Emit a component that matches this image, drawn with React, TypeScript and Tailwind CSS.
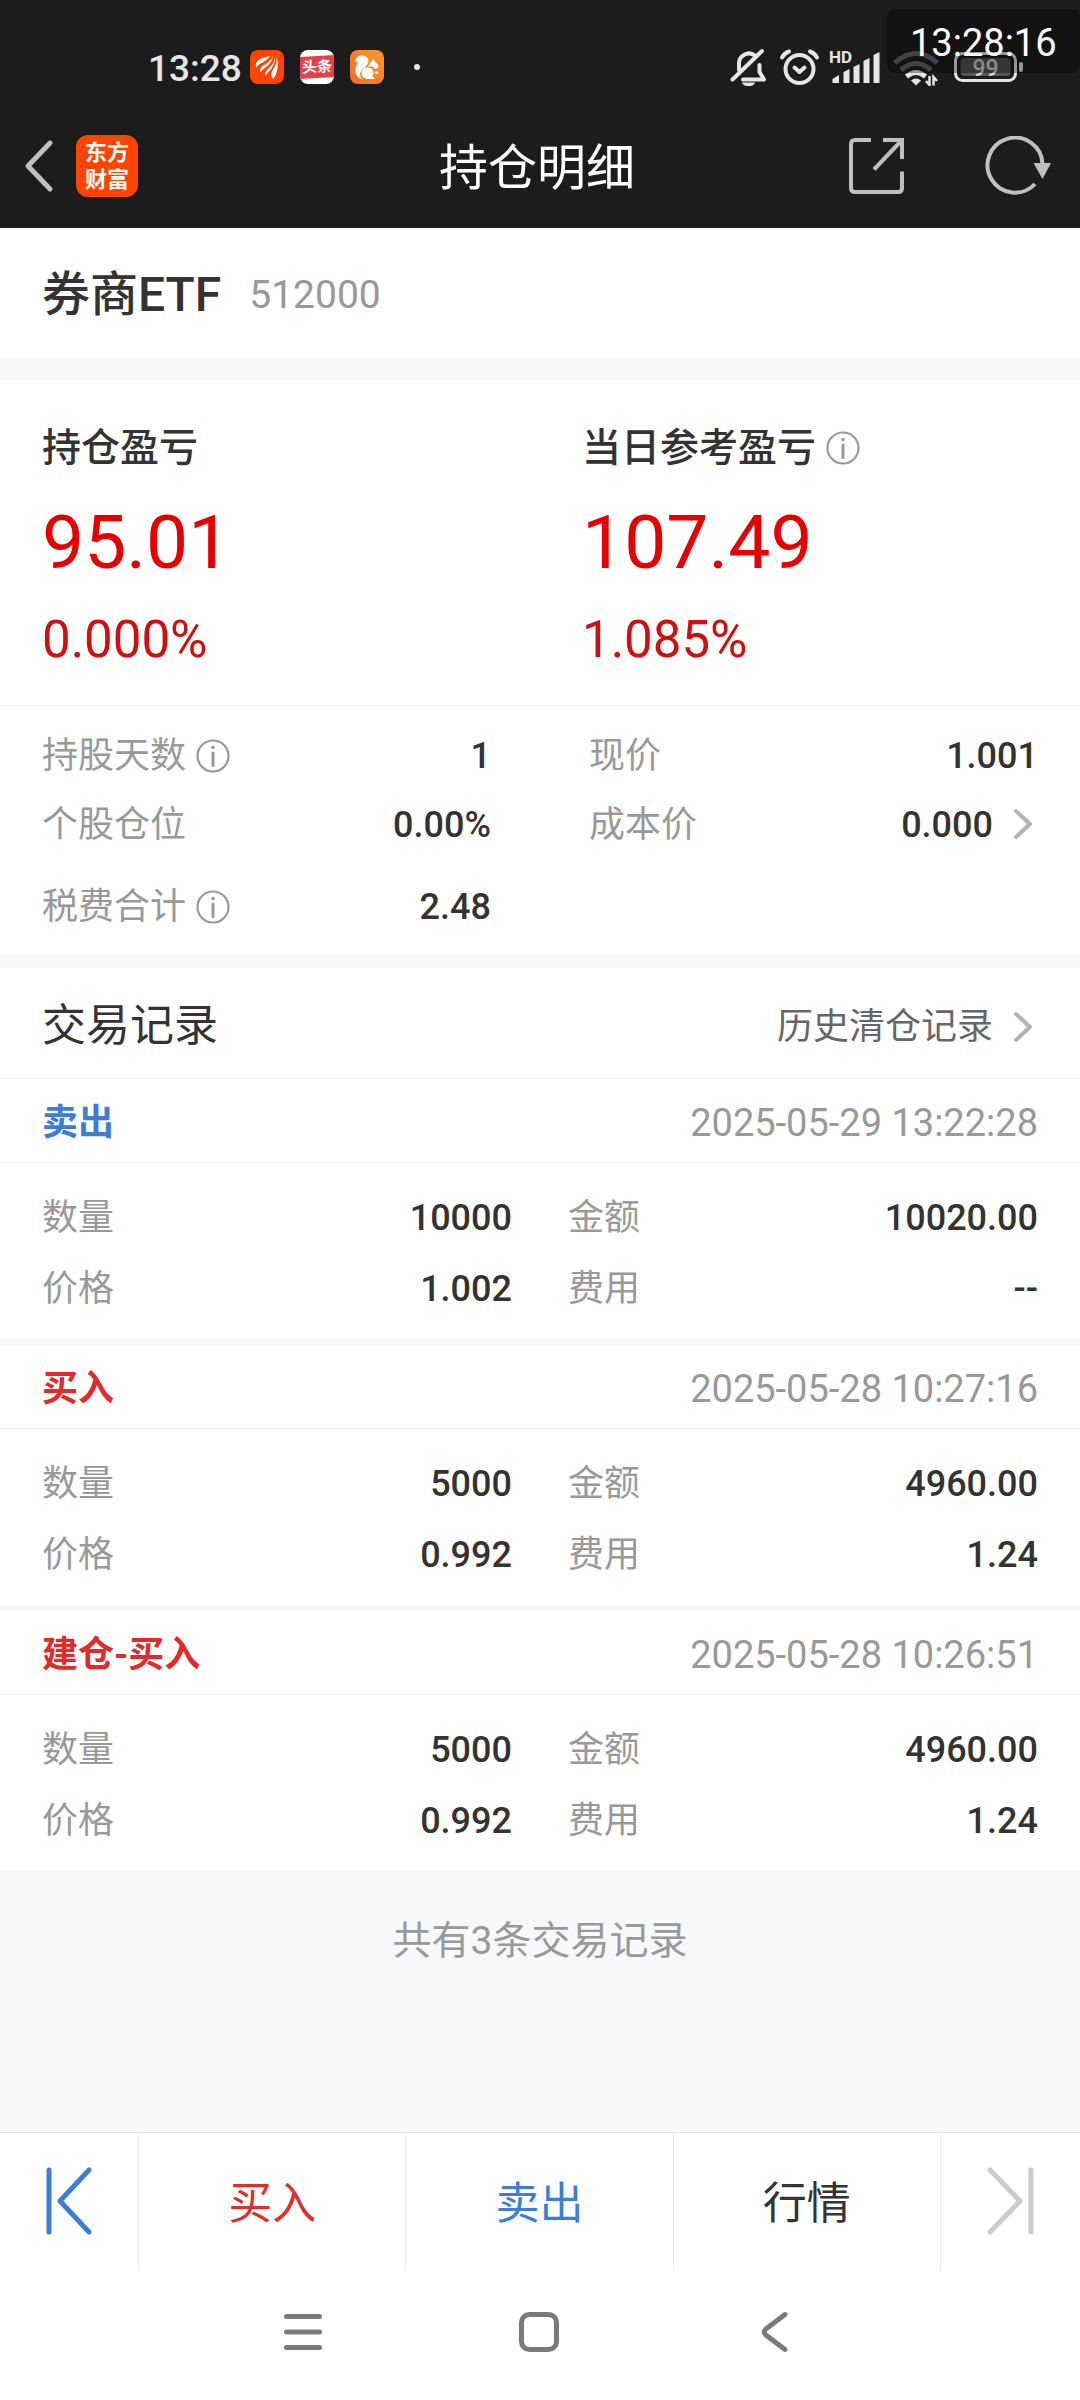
import type { ReactNode } from "react";
import clsx from "clsx";

type Side = "buy" | "sell";

const SUMMARY = [
  { label: "持仓盈亏", value: "95.01", percent: "0.000%", info: false },
  { label: "当日参考盈亏", value: "107.49", percent: "1.085%", info: true },
];

const RECORDS: { title: string; side: Side; time: string; quantity: string; amount: string; price: string; fee: string }[] = [
  { title: "卖出", side: "sell", time: "2025-05-29 13:22:28", quantity: "10000", amount: "10020.00", price: "1.002", fee: "--" },
  { title: "买入", side: "buy", time: "2025-05-28 10:27:16", quantity: "5000", amount: "4960.00", price: "0.992", fee: "1.24" },
  { title: "建仓-买入", side: "buy", time: "2025-05-28 10:26:51", quantity: "5000", amount: "4960.00", price: "0.992", fee: "1.24" },
];

function InfoIcon() {
  return (
    <svg className="h-[34px] w-[34px] shrink-0" viewBox="0 0 34 34" fill="none" stroke="#999999">
      <circle cx="17" cy="17" r="15.5" strokeWidth="2.2" />
      <path d="M17 14v12.5" strokeWidth="3" strokeLinecap="round" />
      <circle cx="17" cy="8.5" r="1.8" fill="#999999" stroke="none" />
    </svg>
  );
}

function ChevronRight() {
  return (
    <svg className="h-8 w-5 shrink-0" viewBox="0 0 20 32" fill="none" stroke="#b3b3b3" strokeWidth="4" strokeLinecap="round" strokeLinejoin="round">
      <path d="M3 3l14 13L3 29" />
    </svg>
  );
}

function AppIcons() {
  return (
    <div className="flex gap-4">
      <svg className="h-[34px] w-[34px]" viewBox="0 0 34 34">
        <rect width="34" height="34" rx="8" fill="#ff4400" />
        <g fill="#fff">
          <path d="M20.500 6C14 7 7 9 6 13.500c-.5 2 0 3.500.5 4C8 13.500 15 12.500 20.500 6z" />
          <path d="M23 6C20 13 12.500 14.500 10.500 18.500c-.8 1.600-.5 2.800.3 3.600C12.500 18 21.500 16 23 6z" />
          <path d="M24.800 6c0 9-7 12-9.300 16-.8 1.500-.4 2.700.4 3.400C18 21 26 17 24.800 6z" />
          <path d="M26.300 6.500C28 15 21.500 19.500 21 25c0 2 1 3 2.300 3.700C27 25 29.500 14 26.300 6.500z" />
        </g>
      </svg>
      <div className="flex h-[34px] w-[34px] items-center overflow-hidden rounded-lg bg-white">
        <span className="w-full -skew-y-3 bg-[#e8404a] text-center text-[15px] leading-[22px] font-bold text-white">头条</span>
      </div>
      <svg className="h-[34px] w-[34px]" viewBox="0 0 34 34">
        <defs>
          <linearGradient id="uc" x1="1" y1="0" x2="0" y2="1">
            <stop offset="0" stopColor="#ff9a2e" />
            <stop offset="1" stopColor="#f76a1c" />
          </linearGradient>
        </defs>
        <rect width="34" height="34" rx="8" fill="url(#uc)" />
        {/* tail */}
        <path
          fill="#fff"
          d="M12 5.500c-5 0-7 3.500-6.500 7 .8-1 2-1.300 3-1-2.500 3-3.500 6.500-3 10C6 26 8.500 28.500 12 29c-2.500-3-2.500-6-.5-8.500 2-2.700 6.500-4.500 7-9 .3-3.500-2.500-6-6.500-6z"
        />
        {/* head and body */}
        <path fill="#fff" d="M23 8.500c-.5 3-4.500 5-4.500 8.500 2-1 4.500-.5 6 1.500 1.500.5 3.500 0 4-1.500 0-3-2.500-4-3.500-5-.3-1.500-1-2.800-2-3.500z" />
        <path fill="#fff" d="M18 17.500a5.800 5.800 0 1 0 0 11.500h6.500c0-1.500-1-2.300-2.500-2.500 3.500-4 .5-9-4-9z" />
        <circle cx="26.500" cy="22.500" r="1.600" fill="#fff" />
      </svg>
    </div>
  );
}

function StatusIcons() {
  return (
    <svg className="h-[38px] w-[294px]" viewBox="730 48 294 38" fill="none">
      {/* muted bell */}
      <g stroke="#e6e6e6" strokeWidth="4" strokeLinecap="round" strokeLinejoin="round">
        <path d="M739 70V64a10 10 0 0 1 16-8.500M759.500 65v7l4.500 7.500H743" />
        <path d="M732.500 79.500L762 51" />
      </g>
      <path d="M742 82.500h13c-1 5-12 5-13 0z" fill="#e6e6e6" />
      {/* alarm */}
      <g stroke="#e6e6e6" strokeWidth="4" strokeLinecap="round" strokeLinejoin="round">
        <circle cx="799.500" cy="69" r="14" />
        <path d="M794.500 67.500l5 4.500 5-4.500" />
        <path d="M782 57.500q2.500-4.500 7-6M817 57.500q-2.500-4.500-7-6" />
      </g>
      <text x="829" y="63" fill="#e6e6e6" fontSize="17" fontWeight="700" fontFamily="Roboto">
        HD
      </text>
      <g fill="#e6e6e6">
        <path d="M832.500 83v-4l6.500-4v8zM843.500 83V72l6-3v14zM853.500 83V67l6-3v19zM863.500 83V61l6-3v25zM873.500 83V55l6-3v31z" />
      </g>
      {/* wifi: outer arcs are faint, inner ones lit */}
      <g strokeWidth="5">
        <path d="M894.500 63q21.500-19 43 0" stroke="#666666" />
        <path d="M901 70q15-13 30 0" stroke="#666666" />
        <path d="M906.500 76.500q9.500-8 19 0" stroke="#e6e6e6" />
      </g>
      <path d="M911 80.500q5-4 10 0l-5 5z" fill="#e6e6e6" />
      <path d="M929.500 76v9l-3.500-4M933.500 85.500V77l3.500 4" stroke="#e6e6e6" strokeWidth="2.500" />
      {/* battery */}
      <rect x="955.500" y="53.500" width="60" height="27" rx="7" stroke="#e6e6e6" strokeWidth="3" />
      <rect x="960.500" y="58" width="50" height="18" rx="4" fill="#555555" />
      <rect x="1019" y="62" width="4" height="10" rx="2" fill="#e6e6e6" />
      <text x="985.500" y="75.500" fill="#d4d4d4" fontSize="23" fontWeight="500" fontFamily="Roboto" textAnchor="middle">
        99
      </text>
    </svg>
  );
}

function StatusBar() {
  return (
    <div className="relative flex h-[106px] items-center pt-7 pr-14 pl-[148px]">
      <span className="w-[102px] pt-0.5 text-[37px] leading-none font-medium text-[#e6e6e6]">13:28</span>
      <AppIcons />
      <span className="ml-[30px] h-1.5 w-1.5 rounded-full bg-[#e6e6e6]" />
      <div className="ml-auto">
        <StatusIcons />
      </div>
      <div className="absolute top-[9px] right-0 flex h-16 w-[193px] items-center rounded-lg bg-black/35 pt-1 pl-[23px] text-[38px] leading-none text-white">
        13:28:16
      </div>
    </div>
  );
}

function TitleBar() {
  return (
    <div className="grid h-[122px] grid-cols-[1fr_auto_1fr] items-center pr-7 pb-0.5 pl-[22px]">
      <div className="flex items-center gap-[22px]">
        <button type="button" aria-label="返回">
          <svg className="h-[54px] w-8" viewBox="0 0 32 54" fill="none" stroke="#bfbfbf" strokeWidth="5" strokeLinecap="round" strokeLinejoin="round">
            <path d="M28 4L6 27l22 23" />
          </svg>
        </button>
        <a href="#home" className="flex h-[62px] w-[62px] flex-col items-center justify-center rounded-xl bg-[#ff4400] text-[22px] leading-[27px] font-bold text-white">
          <span>东方</span>
          <span>财富</span>
        </a>
      </div>
      <h1 className="pt-1 text-[49px] leading-none text-white">持仓明细</h1>
      <div className="flex items-center justify-end gap-[78px]">
        <button type="button" aria-label="分享">
          <svg className="h-[60px] w-[60px]" viewBox="0 0 60 60" fill="none" stroke="#bfbfbf" strokeWidth="4">
            <path d="M25 4H9q-4 0-4 4v44q0 4 4 4h43q4 0 4-4V35.500" />
            <path d="M37 4h19v19M56 4L28 33.500" />
          </svg>
        </button>
        <button type="button" aria-label="刷新">
          <svg className="h-[60px] w-[68px]" viewBox="0 0 68 60" fill="none" stroke="#bfbfbf" strokeWidth="4">
            <path d="M51 48A27.500 27.500 0 1 1 58.500 28" />
            <path d="M49.500 27h17.500l-8.500 16z" fill="#bfbfbf" stroke="none" />
          </svg>
        </button>
      </div>
    </div>
  );
}

function Stat({ label, value, info, className }: { label: string; value: string; info?: boolean; className?: string }) {
  return (
    <div className={clsx("flex items-center justify-between pt-0.5", className)}>
      <dt className="flex items-center gap-2.5 text-[#999999]">
        {label}
        {info && <InfoIcon />}
      </dt>
      <dd className="font-medium text-[#333333]">{value}</dd>
    </div>
  );
}

function Tab({ className, children, ...rest }: { className: string; children: ReactNode; disabled?: boolean; "aria-label"?: string }) {
  return (
    <button type="button" className={clsx("flex items-center justify-center", className)} {...rest}>
      {children}
    </button>
  );
}

export default function App() {
  return (
    <div className="flex min-h-screen flex-col bg-[#f6f8fa] font-[Roboto,'Noto_Sans_CJK_SC',sans-serif] text-[36px] leading-[44px] text-[#333333]">
      <header className="bg-[#1c1c1c]">
        <StatusBar />
        <TitleBar />
      </header>

      <main className="flex-1">
        <section className="flex h-[130px] items-center gap-7 bg-white px-[42px] pt-1">
          <h2 className="text-[48px] font-medium">券商ETF</h2>
          <span className="text-[39px] text-[#999999]">512000</span>
        </section>

        <section className="mt-[22px] bg-white">
          <div className="grid h-[326px] grid-cols-2 border-b border-[#f2f3f5]">
            {SUMMARY.map((item) => (
              <div key={item.label} className="flex flex-col px-[42px] pt-[46px]">
                <div className="flex items-center gap-2.5 text-[39px] font-medium">
                  {item.label}
                  {item.info && <InfoIcon />}
                </div>
                <p className="mt-6 text-[75px] leading-[96px] text-[#e60000]">{item.value}</p>
                <p className="mt-5 text-[51px] leading-[60px] text-[#d01010]">{item.percent}</p>
              </div>
            ))}
          </div>

          <dl className="grid grid-cols-2 pt-3.5">
            <Stat className="h-[69px] pr-[49px] pl-[42px]" label="持股天数" value="1" info />
            <Stat className="h-[69px] pr-[42px] pl-[49px]" label="现价" value="1.001" />
            <Stat className="h-[69px] pr-[49px] pl-[42px]" label="个股仓位" value="0.00%" />
            <a href="#cost" className="flex items-center gap-5 pr-[47px]">
              <Stat className="h-[69px] flex-1 pl-[49px]" label="成本价" value="0.000" />
              <ChevronRight />
            </a>
            <Stat className="h-24 pr-[49px] pl-[42px]" label="税费合计" value="2.48" info />
          </dl>
        </section>

        <section className="mt-3.5">
          <div className="flex h-[111px] items-center justify-between border-b border-[#f2f3f5] bg-white pt-1.5 pr-[47px] pl-[42px]">
            <h2 className="text-[44px]">交易记录</h2>
            <a href="#history" className="flex items-center gap-5 pt-0.5 text-[#666666]">
              历史清仓记录
              <ChevronRight />
            </a>
          </div>

          <div className="flex flex-col gap-1.5">
            {RECORDS.map((record) => (
              <article key={record.time} className="bg-white">
                <div className="flex h-[84px] items-center justify-between border-b border-[#f2f3f5] px-[42px] pt-1">
                  <h3 className={clsx("font-bold", record.side === "sell" ? "text-[#3b7dd8]" : "text-[#e02b2b]")}>{record.title}</h3>
                  <time className="text-[38px] text-[#999999]">{record.time}</time>
                </div>
                <dl className="grid h-44 grid-cols-2 content-start pt-[18px]">
                  <Stat className="h-[71px] pr-7 pl-[42px]" label="数量" value={record.quantity} />
                  <Stat className="h-[71px] pr-[42px] pl-7" label="金额" value={record.amount} />
                  <Stat className="h-[71px] pr-7 pl-[42px]" label="价格" value={record.price} />
                  <Stat className="h-[71px] pr-[42px] pl-7" label="费用" value={record.fee} />
                </dl>
              </article>
            ))}
          </div>

          <p className="pt-12 text-center text-[39px] text-[#999999]">共有{RECORDS.length}条交易记录</p>
        </section>
      </main>

      <footer className="bg-white">
        <div className="flex h-[138px] divide-x divide-[#ebebeb] border-t border-[#ebebeb] text-[44px]">
          <Tab className="w-[139px] pb-0.5" aria-label="上一个">
            <svg className="h-[68px] w-12" viewBox="0 0 48 68" fill="none" stroke="#3b7dd8" strokeWidth="5" strokeLinecap="round" strokeLinejoin="round">
              <path d="M4 3v62M44 3L15 34l29 31" />
            </svg>
          </Tab>
          <Tab className="flex-1 pt-1 text-[#d93030]">买入</Tab>
          <Tab className="flex-1 pt-1 text-[#3b7dd8]">卖出</Tab>
          <Tab className="flex-1 pt-1">行情</Tab>
          <Tab className="w-[139px] pb-0.5" aria-label="下一个" disabled>
            <svg className="h-[68px] w-12" viewBox="0 0 48 68" fill="none" stroke="#cccccc" strokeWidth="5" strokeLinecap="round" strokeLinejoin="round">
              <path d="M45 3v62M4 3l30 31L4 65" />
            </svg>
          </Tab>
        </div>

        <nav className="flex h-[130px] items-center justify-center gap-[196px] pr-0.5 pb-1.5">
          <button type="button" aria-label="菜单">
            <svg className="h-10 w-10" viewBox="0 0 40 40" stroke="#7a7a7a" strokeWidth="5" strokeLinecap="round">
              <path d="M3.500 4.500h33M3.500 20h33M3.500 35.500h33" />
            </svg>
          </button>
          <button type="button" aria-label="主屏幕">
            <svg className="h-10 w-10" viewBox="0 0 40 40" fill="none" stroke="#7a7a7a" strokeWidth="5">
              <rect x="2.500" y="2.500" width="35" height="35" rx="8" />
            </svg>
          </button>
          <button type="button" aria-label="后退">
            <svg className="h-10 w-10" viewBox="0 0 40 40" fill="none" stroke="#7a7a7a" strokeWidth="5" strokeLinecap="round" strokeLinejoin="round">
              <path d="M30 2.500L11.500 16.500q-4.500 3.500 0 7L30 37.500" />
            </svg>
          </button>
        </nav>
      </footer>
    </div>
  );
}
